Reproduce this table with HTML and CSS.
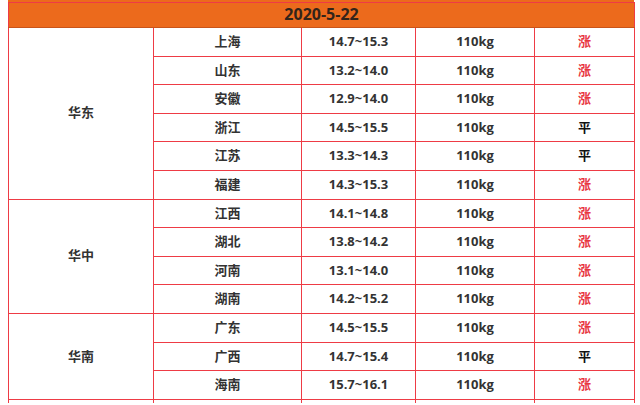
FILE: index.html
```html
<!DOCTYPE html>
<html>
<head>
<meta charset="utf-8">
<link rel="stylesheet" href="styles.css">
</head>
<body>
<div class="wrap">
  <div class="strip"></div>
  <table class="price">
    <colgroup>
      <col class="c1"><col class="c2"><col class="c3"><col class="c4"><col class="c5">
    </colgroup>
    <thead>
      <tr class="head"><th colspan="5">2020-5-22</th></tr>
    </thead>
    <tbody>
      <tr><td rowspan="6">华东</td><td>上海</td><td>14.7~15.3</td><td>110kg</td><td class="up">涨</td></tr>
      <tr><td>山东</td><td>13.2~14.0</td><td>110kg</td><td class="up">涨</td></tr>
      <tr><td>安徽</td><td>12.9~14.0</td><td>110kg</td><td class="up">涨</td></tr>
      <tr><td>浙江</td><td>14.5~15.5</td><td>110kg</td><td class="flat">平</td></tr>
      <tr><td>江苏</td><td>13.3~14.3</td><td>110kg</td><td class="flat">平</td></tr>
      <tr><td>福建</td><td>14.3~15.3</td><td>110kg</td><td class="up">涨</td></tr>
      <tr><td rowspan="4">华中</td><td>江西</td><td>14.1~14.8</td><td>110kg</td><td class="up">涨</td></tr>
      <tr><td>湖北</td><td>13.8~14.2</td><td>110kg</td><td class="up">涨</td></tr>
      <tr><td>河南</td><td>13.1~14.0</td><td>110kg</td><td class="up">涨</td></tr>
      <tr><td>湖南</td><td>14.2~15.2</td><td>110kg</td><td class="up">涨</td></tr>
      <tr><td rowspan="3">华南</td><td>广东</td><td>14.5~15.5</td><td>110kg</td><td class="up">涨</td></tr>
      <tr><td>广西</td><td>14.7~15.4</td><td>110kg</td><td class="flat">平</td></tr>
      <tr><td>海南</td><td>15.7~16.1</td><td>110kg</td><td class="up">涨</td></tr>
      <tr class="cut"><td></td><td></td><td></td><td></td><td></td></tr>
    </tbody>
  </table>
</div>
</body>
</html>
```
FILE: styles.css
```css
html, body {
  margin: 0;
  padding: 0;
  background: #ffffff;
  overflow: hidden;
  height: 405px;
}
.wrap {
  padding-left: 8px;
  width: 626px;
}
.strip {
  height: 2px;
  background: #ec6a1c;
}
.price {
  border-collapse: collapse;
  table-layout: fixed;
  width: 626px;
  font-family: "Open Sans", "Noto Sans CJK SC", sans-serif;
  font-size: 13px;
  font-weight: bold;
  color: #333333;
}
.c1 { width: 145px; }
.c2 { width: 148px; }
.c3 { width: 114px; }
.c4 { width: 119px; }
.c5 { width: 100px; }
.price th, .price td {
  border: 1px solid #ee3b45;
  text-align: center;
  vertical-align: middle;
  padding: 0;
  line-height: 1.2;
}
.price tbody td {
  height: 27.6px;
}
.price tbody .cut td {
  height: 3px;
  border-bottom: 0;
}
.head th {
  background: #ec6a1c;
  height: 24px;
  color: #33241a;
  border-bottom-color: #c9541a;
  font-size: 16px;
}
.up {
  color: #e8363f;
}
.flat {
  color: #111111;
}
```
